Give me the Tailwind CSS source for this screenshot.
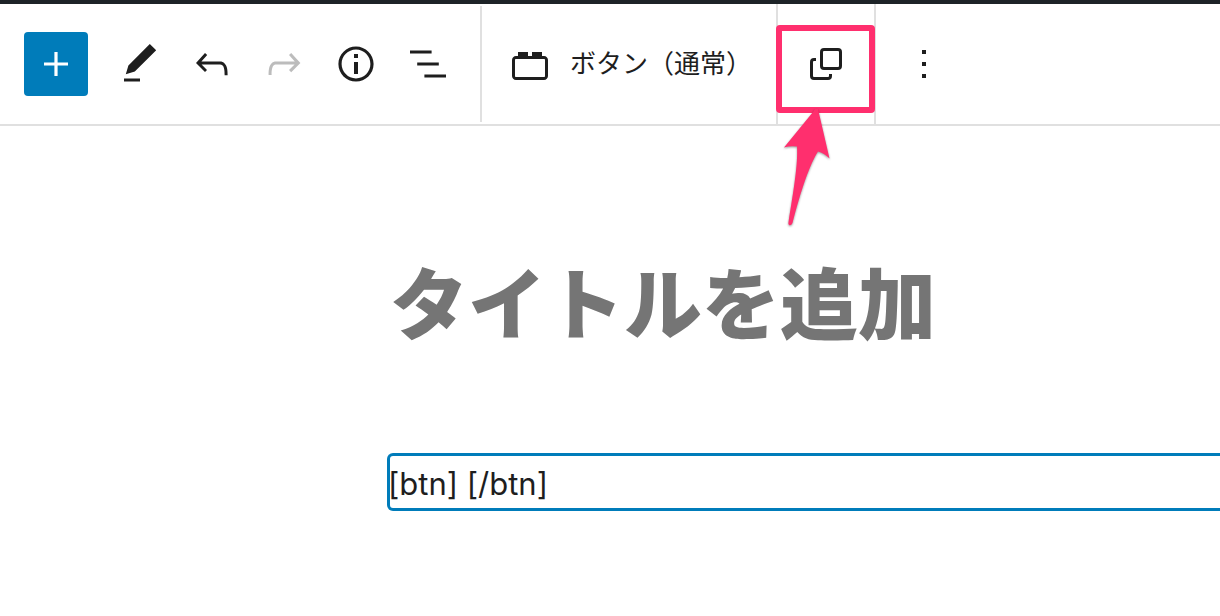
<!DOCTYPE html>
<html lang="ja">
  <head>
    <meta charset="UTF-8" />
    <meta name="viewport" content="width=device-width, initial-scale=1.0" />
    <title>投稿を編集</title>
    <script src="https://cdn.jsdelivr.net/npm/@tailwindcss/browser@4"></script>
  </head>
  <body class="bg-white font-['Inter','Noto_Sans_CJK_JP',sans-serif] text-[#1e1e1e] overflow-x-hidden">
    <div class="border-t-4 border-[#1d2327]">
      <header class="flex h-[122px] border-b-2 border-[#e0e0e0]">
        <!-- document tools -->
        <div class="flex items-center shrink-0 pl-6 pr-4">
          <button type="button" aria-label="ブロックを追加" class="flex items-center justify-center size-16 mr-4 rounded bg-[#007cba] text-white">
            <svg class="size-12 fill-current" viewBox="0 0 24 24"><path d="M18 11.2h-5.2V6h-1.6v5.2H6v1.6h5.2V18h1.6v-5.2H18z" /></svg>
          </button>
          <button type="button" aria-label="編集" class="flex items-center justify-center w-18 h-16">
            <svg class="size-12 fill-current" viewBox="0 0 24 24"><path d="M20.1 5.1L16.9 2 6.2 12.7l-1.3 4.4 4.5-1.3L20.1 5.1zM4 20.8h8v-1.5H4v1.5z" /></svg>
          </button>
          <button type="button" aria-label="元に戻す" class="flex items-center justify-center w-18 h-16">
            <svg class="size-12 fill-current" viewBox="0 0 24 24"><path d="M18.3 11.7c-.6-.6-1.4-.9-2.3-.9H6.7l2.9-3.3-1.1-1-4.5 5L8.5 16l1-1-2.7-2.7H16c.5 0 .9.2 1.3.5 1 1 1 3.4 1 4.5v.3h1.5v-.2c0-1.5 0-4.3-1.5-5.7z" /></svg>
          </button>
          <button type="button" aria-label="やり直す" disabled class="flex items-center justify-center w-18 h-16 text-[#bcbcbc]">
            <svg class="size-12 fill-current" viewBox="0 0 24 24"><path d="M15.6 6.5l-1.1 1 2.9 3.3H8c-.9 0-1.7.3-2.3.9-1.4 1.5-1.4 4.2-1.4 5.6v.2h1.5v-.3c0-1.1 0-3.5 1-4.5.3-.3.7-.5 1.3-.5h9.2L14.5 15l1.1 1.1 4.6-4.6-4.6-5z" /></svg>
          </button>
          <button type="button" aria-label="詳細" class="flex items-center justify-center w-18 h-16">
            <svg class="size-12 fill-current" viewBox="0 0 24 24"><path d="M12 3.2c-4.8 0-8.8 3.9-8.8 8.8 0 4.8 3.9 8.8 8.8 8.8 4.8 0 8.8-3.9 8.8-8.8 0-4.8-4-8.8-8.8-8.8zm0 16c-4 0-7.2-3.3-7.2-7.2C4.8 8 8 4.8 12 4.8s7.2 3.3 7.2 7.2c0 4-3.2 7.2-7.2 7.2zM11 17h2v-6h-2v6zm0-8h2V7h-2v2z" /></svg>
          </button>
          <button type="button" aria-label="リスト表示" class="flex items-center justify-center w-18 h-16">
            <svg class="size-12 fill-current" viewBox="0 0 24 24"><path d="M13.8 5.2H3v1.5h10.8V5.2zm-3.6 12v1.5H21v-1.5H10.2zm7.2-6H6.6v1.5h10.8v-1.5z" /></svg>
          </button>
        </div>
        <!-- block toolbar -->
        <div class="my-[2px] border-l-2 border-[#e0e0e0]"></div>
        <button type="button" class="flex items-center shrink-0 gap-4 pl-6 pr-6 text-[26px] leading-8 font-['Noto_Sans_CJK_JP',sans-serif] whitespace-nowrap">
          <svg class="size-12 fill-current" viewBox="0 0 24 24"><path d="M19 8h-1V6h-5v2h-2V6H6v2H5c-1.1 0-2 .9-2 2v8c0 1.1.9 2 2 2h14c1.1 0 2-.9 2-2v-8c0-1.1-.9-2-2-2zm.5 10c0 .3-.2.5-.5.5H5c-.3 0-.5-.2-.5-.5v-8c0-.3.2-.5.5-.5h14c.3 0 .5.2.5.5v8z" /></svg>
          <span class="pb-1">ボタン（通常）</span>
        </button>
        <div class="relative flex shrink-0 w-[100px] border-x-2 border-[#e0e0e0]">
          <button type="button" aria-label="変換" class="flex items-center justify-center w-full">
            <svg class="size-12 fill-none stroke-current stroke-[1.5]" viewBox="0 0 24 24">
              <rect x="9.75" y="4.75" width="9.5" height="9.5" rx="1.25" />
              <path d="M7 9.75H6c-.7 0-1.25.55-1.25 1.25v7c0 .7.55 1.25 1.25 1.25h7c.7 0 1.25-.55 1.25-1.25v-1" />
            </svg>
          </button>
          <!-- highlight frame and arrow -->
          <div class="absolute -left-[2px] -right-px top-[21px] h-[88px] border-6 border-[#ff2f6e] rounded pointer-events-none"></div>
          <svg class="absolute left-0 top-[104px] w-[60px] h-[124px] fill-[#ff2f6e] drop-shadow-[0_1px_1px_rgb(0_0_0/0.4)] pointer-events-none" viewBox="0 0 60 124">
            <path d="M37 1H40L51.500 50.500Q46 45 40 43.500C32 56 23 82 14.500 115Q13 118 11 117Q10 116 10.500 114C16 80 20 56 19 38.500Q12 37.500 6 39.500L35 4Z" />
          </svg>
        </div>
        <button type="button" aria-label="オプション" class="flex items-center justify-center shrink-0 w-24">
          <svg class="size-12 fill-current" viewBox="0 0 24 24"><path d="M13 19h-2v-2h2v2zm0-6h-2v-2h2v2zm0-6h-2V5h2v2z" /></svg>
        </button>
      </header>

      <main class="pl-[387px] pt-[114px]">
        <input type="text" aria-label="タイトル" placeholder="タイトルを追加" class="block w-full h-[120px] pl-[3px] text-[78px] font-black font-['Noto_Sans_CJK_JP',sans-serif] placeholder:text-[#757575] placeholder:opacity-100 outline-none" />
        <div class="pt-[93px] -mr-2">
          <input type="text" aria-label="ショートコード" value="[btn] [/btn]" class="block w-full h-[58px] pl-px pt-[2px] inset-ring-3 inset-ring-[#007cba] rounded-md text-[31px] outline-none" />
        </div>
      </main>
    </div>
  </body>
</html>
